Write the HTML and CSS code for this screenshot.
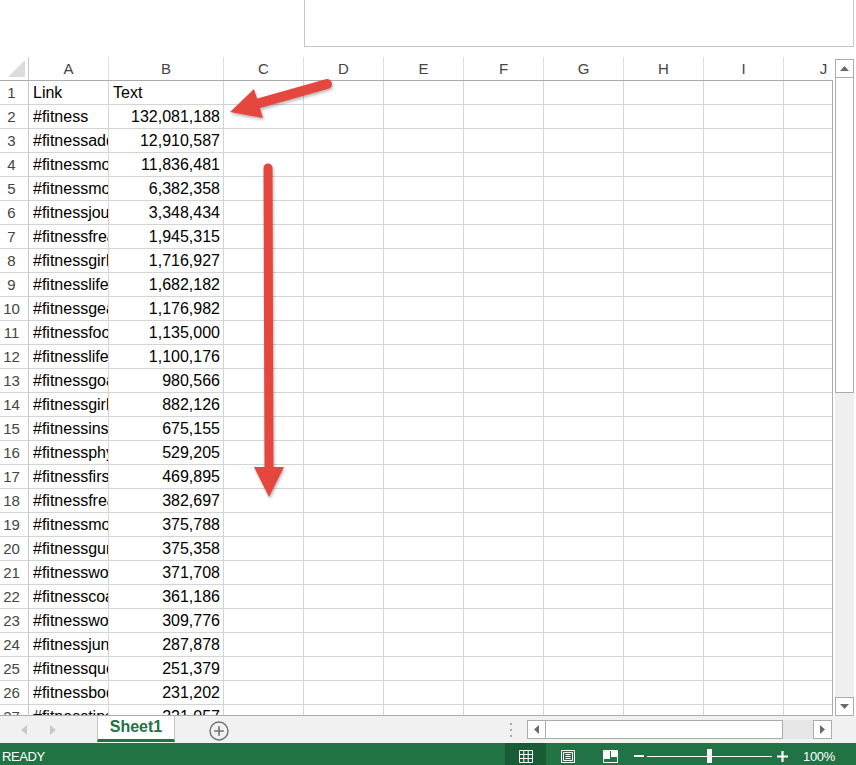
FILE: index.html
```html
<!DOCTYPE html>
<html>
<head>
<meta charset="utf-8">
<link rel="stylesheet" href="styles.css">
</head>
<body>
<div class="top"><div class="formula-box"></div></div>

<div class="main">
  <div class="sheet">
    <div class="colhead">
      <span class="corner"><svg width="28" height="23" viewBox="0 0 28 23"><polygon points="8,20 25,20 25,3" fill="#dcdcdc"/></svg></span>
      <span>A</span><span>B</span><span>C</span><span>D</span><span>E</span><span>F</span><span>G</span><span>H</span><span>I</span><span>J</span>
    </div>
    <div class="body">
      <div class="row"><span class="rh">1</span><span>Link</span><span>Text</span><span></span><span></span><span></span><span></span><span></span><span></span><span></span><span></span></div>
      <div class="row"><span class="rh">2</span><span>#fitness</span><span class="num">132,081,188</span><span></span><span></span><span></span><span></span><span></span><span></span><span></span><span></span></div>
      <div class="row"><span class="rh">3</span><span>#fitnessaddict</span><span class="num">12,910,587</span><span></span><span></span><span></span><span></span><span></span><span></span><span></span><span></span></div>
      <div class="row"><span class="rh">4</span><span>#fitnessmodel</span><span class="num">11,836,481</span><span></span><span></span><span></span><span></span><span></span><span></span><span></span><span></span></div>
      <div class="row"><span class="rh">5</span><span>#fitnessmotivation</span><span class="num">6,382,358</span><span></span><span></span><span></span><span></span><span></span><span></span><span></span><span></span></div>
      <div class="row"><span class="rh">6</span><span>#fitnessjourney</span><span class="num">3,348,434</span><span></span><span></span><span></span><span></span><span></span><span></span><span></span><span></span></div>
      <div class="row"><span class="rh">7</span><span>#fitnessfreak</span><span class="num">1,945,315</span><span></span><span></span><span></span><span></span><span></span><span></span><span></span><span></span></div>
      <div class="row"><span class="rh">8</span><span>#fitnessgirl</span><span class="num">1,716,927</span><span></span><span></span><span></span><span></span><span></span><span></span><span></span><span></span></div>
      <div class="row"><span class="rh">9</span><span>#fitnesslife</span><span class="num">1,682,182</span><span></span><span></span><span></span><span></span><span></span><span></span><span></span><span></span></div>
      <div class="row"><span class="rh">10</span><span>#fitnessgear</span><span class="num">1,176,982</span><span></span><span></span><span></span><span></span><span></span><span></span><span></span><span></span></div>
      <div class="row"><span class="rh">11</span><span>#fitnessfood</span><span class="num">1,135,000</span><span></span><span></span><span></span><span></span><span></span><span></span><span></span><span></span></div>
      <div class="row"><span class="rh">12</span><span>#fitnesslifestyle</span><span class="num">1,100,176</span><span></span><span></span><span></span><span></span><span></span><span></span><span></span><span></span></div>
      <div class="row"><span class="rh">13</span><span>#fitnessgoals</span><span class="num">980,566</span><span></span><span></span><span></span><span></span><span></span><span></span><span></span><span></span></div>
      <div class="row"><span class="rh">14</span><span>#fitnessgirls</span><span class="num">882,126</span><span></span><span></span><span></span><span></span><span></span><span></span><span></span><span></span></div>
      <div class="row"><span class="rh">15</span><span>#fitnessinspiration</span><span class="num">675,155</span><span></span><span></span><span></span><span></span><span></span><span></span><span></span><span></span></div>
      <div class="row"><span class="rh">16</span><span>#fitnessphysique</span><span class="num">529,205</span><span></span><span></span><span></span><span></span><span></span><span></span><span></span><span></span></div>
      <div class="row"><span class="rh">17</span><span>#fitnessfirst</span><span class="num">469,895</span><span></span><span></span><span></span><span></span><span></span><span></span><span></span><span></span></div>
      <div class="row"><span class="rh">18</span><span>#fitnessfreaks</span><span class="num">382,697</span><span></span><span></span><span></span><span></span><span></span><span></span><span></span><span></span></div>
      <div class="row"><span class="rh">19</span><span>#fitnessmom</span><span class="num">375,788</span><span></span><span></span><span></span><span></span><span></span><span></span><span></span><span></span></div>
      <div class="row"><span class="rh">20</span><span>#fitnessguru</span><span class="num">375,358</span><span></span><span></span><span></span><span></span><span></span><span></span><span></span><span></span></div>
      <div class="row"><span class="rh">21</span><span>#fitnessworld</span><span class="num">371,708</span><span></span><span></span><span></span><span></span><span></span><span></span><span></span><span></span></div>
      <div class="row"><span class="rh">22</span><span>#fitnesscoach</span><span class="num">361,186</span><span></span><span></span><span></span><span></span><span></span><span></span><span></span><span></span></div>
      <div class="row"><span class="rh">23</span><span>#fitnesswomen</span><span class="num">309,776</span><span></span><span></span><span></span><span></span><span></span><span></span><span></span><span></span></div>
      <div class="row"><span class="rh">24</span><span>#fitnessjunkie</span><span class="num">287,878</span><span></span><span></span><span></span><span></span><span></span><span></span><span></span><span></span></div>
      <div class="row"><span class="rh">25</span><span>#fitnessquotes</span><span class="num">251,379</span><span></span><span></span><span></span><span></span><span></span><span></span><span></span><span></span></div>
      <div class="row"><span class="rh">26</span><span>#fitnessbody</span><span class="num">231,202</span><span></span><span></span><span></span><span></span><span></span><span></span><span></span><span></span></div>
      <div class="row"><span class="rh">27</span><span>#fitnesstips</span><span class="num">221,057</span><span></span><span></span><span></span><span></span><span></span><span></span><span></span><span></span></div>
    </div>
  </div>
  <div class="vscroll">
    <div class="sbtn"><svg width="9" height="5" viewBox="0 0 9 5"><polygon points="0,5 9,5 4.5,0" fill="#6a6a6a"/></svg></div>
    <div class="vthumb"></div>
    <div class="vtrack"></div>
    <div class="sbtn"><svg width="9" height="5" viewBox="0 0 9 5"><polygon points="0,0 9,0 4.5,5" fill="#6a6a6a"/></svg></div>
  </div>
</div>

<div class="tabbar">
  <div class="nav">
    <svg width="6" height="10" viewBox="0 0 6 10"><polygon points="6,0 6,10 0,5" fill="#c9c9c9"/></svg>
    <svg width="6" height="10" viewBox="0 0 6 10"><polygon points="0,0 0,10 6,5" fill="#c9c9c9"/></svg>
  </div>
  <div class="tab">Sheet1</div>
  <div class="addsheet"><svg width="20" height="20" viewBox="0 0 20 20"><circle cx="10" cy="10" r="9" fill="none" stroke="#707070" stroke-width="1.4"/><path d="M10 5.2v9.6M5.2 10h9.6" stroke="#707070" stroke-width="1.6"/></svg></div>
  <div class="spacer"></div>
  <div class="dots"><i></i><i></i><i></i></div>
  <div class="hscroll">
    <div class="sbtn"><svg width="5" height="9" viewBox="0 0 5 9"><polygon points="5,0 5,9 0,4.5" fill="#6a6a6a"/></svg></div>
    <div class="hthumb"></div>
    <div class="htrack"></div>
    <div class="sbtn"><svg width="5" height="9" viewBox="0 0 5 9"><polygon points="0,0 0,9 5,4.5" fill="#6a6a6a"/></svg></div>
  </div>
</div>

<div class="status">
  <span class="ready">READY</span>
  <div class="views">
    <span class="view active"><svg width="14" height="13" viewBox="0 0 14 13"><path d="M0.5 0.5h13v12h-13zM4.8 0.5v12M9.2 0.5v12M0.5 4.5h13M0.5 8.5h13" fill="none" stroke="#fff" stroke-width="1"/></svg></span>
    <span class="view"><svg width="14" height="13" viewBox="0 0 14 13"><path d="M0.5 0.5h13v12h-13zM2.5 2.5h9v8h-9zM4.5 4.5h5M4.5 6.5h5M4.5 8.5h5" fill="none" stroke="#fff" stroke-width="1"/></svg></span>
    <span class="view"><svg width="15" height="13" viewBox="0 0 15 13"><path d="M0.5 0.5h14v12h-14z" fill="none" stroke="#fff" stroke-width="1"/><rect x="1" y="1" width="6" height="8" fill="#fff"/><rect x="8" y="1" width="6" height="6" fill="#fff"/></svg></span>
  </div>
  <div class="zoom">
    <span class="minus"></span>
    <span class="slider"><i class="knob"></i></span>
    <span class="plus"><svg width="11" height="11" viewBox="0 0 11 11"><path d="M0 5.5h11M5.5 0v11" stroke="#fff" stroke-width="2.2"/></svg></span>
    <span class="pct">100%</span>
  </div>
</div>

<svg class="marks" width="856" height="765" viewBox="0 0 856 765">
  <line x1="327" y1="84" x2="256" y2="104" stroke="#e5473f" stroke-width="10" stroke-linecap="round"/>
  <polygon points="230,112 254,89 263,118" fill="#e5473f"/>
  <line x1="268" y1="168" x2="269" y2="472" stroke="#e5473f" stroke-width="9" stroke-linecap="round"/>
  <polygon points="254,467 284,467 269,497" fill="#e5473f"/>
</svg>
</body>
</html>
```
FILE: styles.css
```css
* { box-sizing: border-box; margin: 0; padding: 0; }
html, body { width: 856px; height: 765px; overflow: hidden; background: #fff; }
body { font-family: "Liberation Sans", Arial, sans-serif; position: relative; }

.top { height: 57px; display: flex; justify-content: flex-end; padding-right: 2px; }
.formula-box { width: 550px; height: 47px; border: 1px solid #c6c6c6; border-top: none; }

.main { display: flex; height: 659px; }
.sheet { width: 833px; display: flex; flex-direction: column; }

.colhead, .row {
  display: grid;
  grid-template-columns: 29px 80px 115px repeat(8, 80px);
  width: 864px;
}
.colhead { height: 24px; border-bottom: 1px solid #ababab; width: 833px; overflow: hidden; }
.colhead span {
  border-right: 1px solid #dedede;
  text-align: center;
  font-size: 15px;
  line-height: 23px;
  color: #444;
}
.colhead .corner { border-right-color: #c8c8c8; }
.colhead .corner svg { display: block; }

.body { height: 635px; width: 833px; overflow: hidden; border-right: 1px solid #ababab; border-bottom: 1px solid #ababab; }
.row { height: 24px; }
.row span {
  border-right: 1px solid #d4d4d4;
  border-bottom: 1px solid #d4d4d4;
  overflow: hidden;
  white-space: nowrap;
  font-size: 16px;
  line-height: 24px;
  padding: 0 3px 0 4px;
  color: #000;
}
.row .rh { color: #444; font-size: 15px; text-align: center; padding: 0 5px 0 0; border-right-color: #c8c8c8; }
.row .num { text-align: right; }

.vscroll { width: 19px; margin: 2px 0 0 2px; height: 657px; display: flex; flex-direction: column; }
.sbtn { width: 19px; height: 19px; border: 1px solid #ababab; background: #fff; display: flex; align-items: center; justify-content: center; flex-shrink: 0; }
.vthumb { height: 315px; border: 1px solid #ababab; border-top: none; background: #fff; }
.vtrack { flex: 1; background: #efefef; }

.tabbar { height: 27px; background: #f1f1f1; display: flex; align-items: stretch; padding-right: 24px; }
.nav { width: 97px; display: flex; align-items: center; gap: 23px; padding-left: 21px; }
.nav svg { display: block; }
.tab {
  width: 78px; height: 26px; background: #fff;
  border-left: 1px solid #c6c6c6; border-right: 1px solid #c6c6c6;
  border-bottom: 3px solid #217346;
  color: #217346; font-weight: bold; font-size: 16px; text-align: center; line-height: 22px;
}
.addsheet { margin-left: 34px; display: flex; align-items: center; padding-top: 3px; }
.addsheet svg { display: block; }
.spacer { flex: 1; }
.dots { display: flex; flex-direction: column; justify-content: center; gap: 4px; width: 2px; margin-right: 15px; }
.dots i { display: block; width: 2px; height: 2px; background: #a8a8a8; }
.hscroll { width: 305px; height: 19px; margin-top: 4px; display: flex; }
.hthumb { width: 237px; border: 1px solid #ababab; border-left: none; background: #fff; }
.htrack { flex: 1; background: #e6e6e6; }

.status { height: 22px; background: #217346; color: #fff; display: flex; align-items: stretch; }
.ready { padding: 3px 0 0 2px; font-size: 13px; letter-spacing: -0.4px; line-height: 22px; flex: 1; }
.views { display: flex; }
.view { width: 42px; display: flex; align-items: center; justify-content: center; padding-top: 4px; }
.view svg { display: block; }
.view.active { width: 41px; background: #185c35; margin-right: 1px; }
.zoom { display: flex; align-items: center; padding: 4px 22px 0 0; }
.minus { width: 10px; height: 2px; background: #fff; margin-left: 3px; }
.slider { width: 125px; height: 1px; background: #fff; margin-left: 3px; position: relative; }
.knob { position: absolute; left: 60px; top: -7px; width: 5px; height: 14px; background: #fff; }
.plus { margin-left: 5px; display: flex; }
.plus svg { display: block; }
.pct { margin-left: 15px; font-size: 13px; letter-spacing: -0.3px; width: 31px; }

.marks { position: absolute; left: 0; top: 0; pointer-events: none; filter: drop-shadow(1px 2px 1.5px rgba(0,0,0,0.28)); }
```
